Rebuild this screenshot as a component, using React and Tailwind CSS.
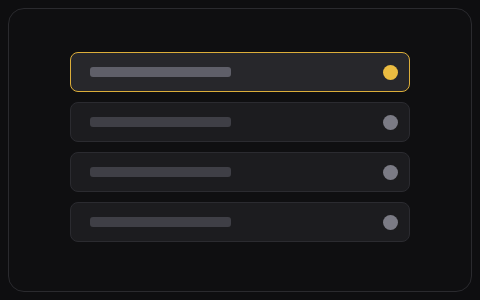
import React from 'react';

const items = [
  { active: true },
  { active: false },
  { active: false },
  { active: false },
];

export default function App() {
  return (
    <div className="w-[480px] h-[300px] bg-[#0e0e10] p-2" style={{ fontFamily: '"Liberation Sans", sans-serif' }}>
      <div className="h-full rounded-2xl border border-[#2a2a2e] bg-[#0f0f11] pt-[43px] flex flex-col items-center">
        <div className="flex flex-col gap-[10px] w-[340px]">
          {items.map((it, i) => (
            <div
              key={i}
              className={
                it.active
                  ? 'h-10 rounded-lg border border-[#dcae3a] bg-[#27272b] flex items-center justify-between pl-[19px] pr-[11px]'
                  : 'h-10 rounded-lg border border-[#2b2b30] bg-[#1c1c1f] flex items-center justify-between pl-[19px] pr-[11px]'
              }
            >
              <div className={it.active ? 'w-[141px] h-[10px] rounded-[3px] bg-[#5f5f69]' : 'w-[141px] h-[10px] rounded-[3px] bg-[#3f3f46]'} />
              <div className={it.active ? 'w-[15px] h-[15px] rounded-full bg-[#ebbc41]' : 'w-[15px] h-[15px] rounded-full bg-[#7b7b85]'} />
            </div>
          ))}
        </div>
      </div>
    </div>
  );
}
